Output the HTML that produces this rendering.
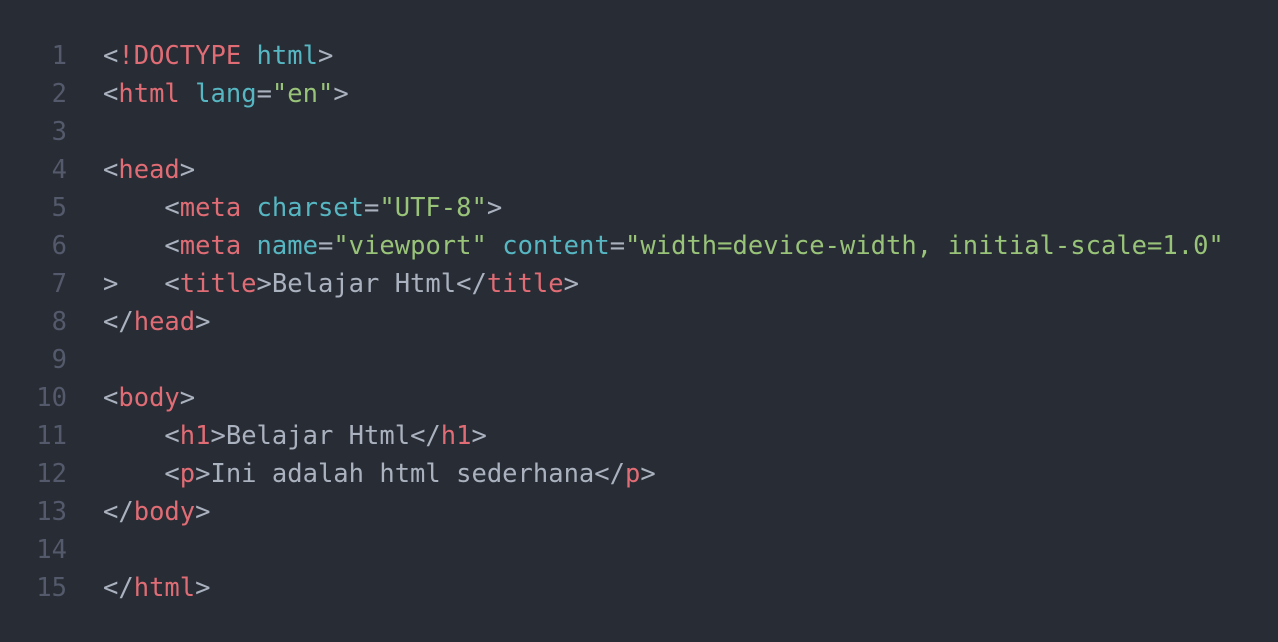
<!DOCTYPE html>
<html><head><style>
html,body{margin:0;padding:0;background:#282c34;width:1278px;height:642px;overflow:hidden}
.c{position:absolute;top:37px;left:0;font-family:"DejaVu Sans Mono","Liberation Mono",monospace;font-size:25.5px;line-height:38px;color:#abb2bf}
.l{height:38px;position:relative}
.n{position:absolute;left:0;width:67px;text-align:right;color:#545a6b}
.t,.f{position:absolute;left:103px;white-space:pre}
.r{color:#e06c75}.a{color:#56b6c2}.s{color:#98c379}
</style></head><body><div class="c">
<div class="l"><span class="n">1</span><span class="t">&lt;<span class="r">!DOCTYPE</span> <span class="a">html</span>&gt;</span></div>
<div class="l"><span class="n">2</span><span class="t">&lt;<span class="r">html</span> <span class="a">lang</span>=<span class="s">"en"</span>&gt;</span></div>
<div class="l"><span class="n">3</span></div>
<div class="l"><span class="n">4</span><span class="t">&lt;<span class="r">head</span>&gt;</span></div>
<div class="l"><span class="n">5</span><span class="t">    &lt;<span class="r">meta</span> <span class="a">charset</span>=<span class="s">"UTF-8"</span>&gt;</span></div>
<div class="l"><span class="n">6</span><span class="t">    &lt;<span class="r">meta</span> <span class="a">name</span>=<span class="s">"viewport"</span> <span class="a">content</span>=<span class="s">"width=device-width, initial-scale=1.0"</span></span></div>
<div class="l"><span class="n">7</span><span class="f">&gt;   &lt;<span class="r">title</span>&gt;Belajar Html&lt;/<span class="r">title</span>&gt;</span></div>
<div class="l"><span class="n">8</span><span class="t">&lt;/<span class="r">head</span>&gt;</span></div>
<div class="l"><span class="n">9</span></div>
<div class="l"><span class="n">10</span><span class="t">&lt;<span class="r">body</span>&gt;</span></div>
<div class="l"><span class="n">11</span><span class="t">    &lt;<span class="r">h1</span>&gt;Belajar Html&lt;/<span class="r">h1</span>&gt;</span></div>
<div class="l"><span class="n">12</span><span class="t">    &lt;<span class="r">p</span>&gt;Ini adalah html sederhana&lt;/<span class="r">p</span>&gt;</span></div>
<div class="l"><span class="n">13</span><span class="t">&lt;/<span class="r">body</span>&gt;</span></div>
<div class="l"><span class="n">14</span></div>
<div class="l"><span class="n">15</span><span class="t">&lt;/<span class="r">html</span>&gt;</span></div>
</div></body></html>
